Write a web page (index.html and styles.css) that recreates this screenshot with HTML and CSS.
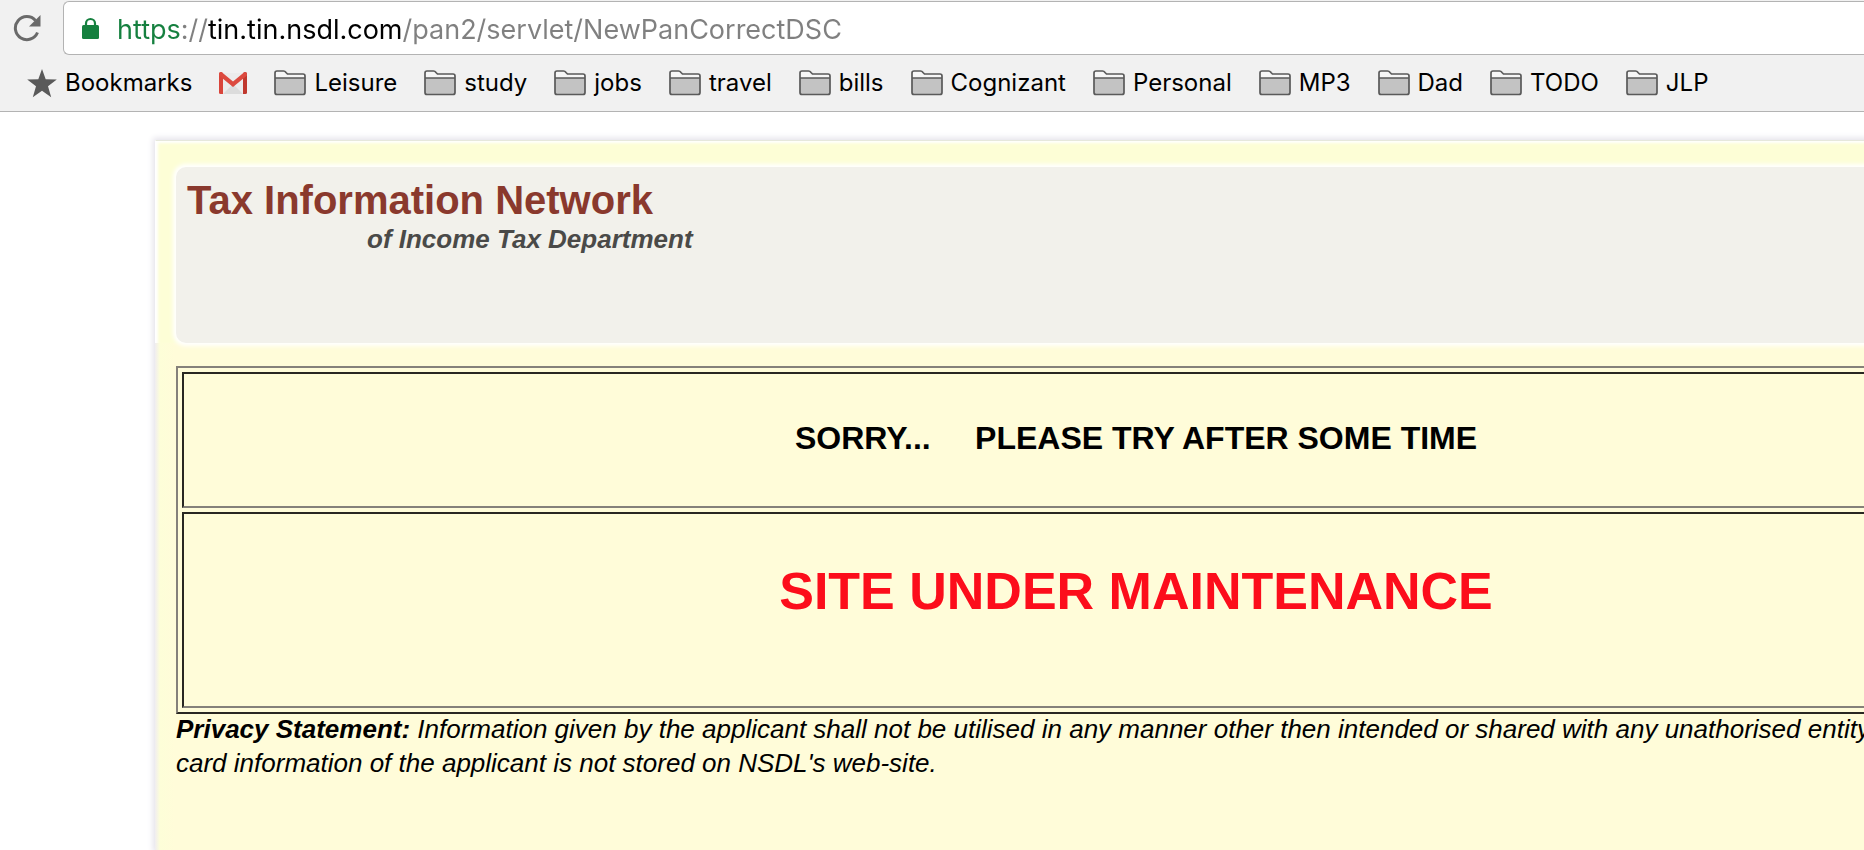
FILE: index.html
```html
<!DOCTYPE html>
<html lang="en">
<head>
  <meta charset="UTF-8" />
  <meta name="viewport" content="width=device-width, initial-scale=1.0" />
  <title>Tax Information Network</title>
  <link rel="stylesheet" href="styles.css">
</head>
<body>
  <svg class="sprite" aria-hidden="true">
    <symbol id="folder" viewBox="0 0 32 26">
      <path d="M1 23V3Q1 1 3 1H9.500Q11 1 12 2.500L13.500 4H29Q31 4 31 6V23Z" fill="#f6f6f6" />
      <path d="M1 8H31V23Q31 25 29 25H3Q1 25 1 23Z" fill="#c3c3c3" />
      <path d="M1 8H31M3 1H9.500Q11 1 12 2.500L13.500 4H29Q31 4 31 6V22.500Q31 24.500 29 24.500H3Q1 24.500 1 22.500V3Q1 1 3 1Z" fill="none" stroke="#5a5a5a" stroke-width="1.700" />
    </symbol>
  </svg>

  <header class="browser">
    <div class="toolbar">
      <button type="button" class="reload" aria-label="Reload">
        <svg width="28" height="28" viewBox="0 0 28 28">
          <path d="M24.500 18.500A11.500 11.500 0 1 1 22.500 6.500" fill="none" stroke="#6a6a6a" stroke-width="3" />
          <path d="M27.500 1V12.500H16Z" fill="#6a6a6a" />
        </svg>
      </button>
      <div class="address-bar">
        <svg width="17" height="22" viewBox="0 0 17 22" aria-hidden="true">
          <path d="M4 10V6.500a4.500 4.500 0 0 1 9 0V10" fill="none" stroke="#15803f" stroke-width="2.200" />
          <rect y="8" width="17" height="14" rx="1.500" fill="#15803f" />
        </svg>
        <input type="text" class="url" aria-label="Address" value="https://tin.tin.nsdl.com/pan2/servlet/NewPanCorrectDSC" spellcheck="false" />
      </div>
    </div>

    <nav class="bookmarks">
      <a href="#">
        <svg width="30" height="29" viewBox="0 0 30 29"><path d="M15 0L18.700 10.200L29.800 10.600L21 17.300L24.200 28.200L15 21.800L5.800 28.200L9 17.300L0.200 10.600L11.300 10.200Z" fill="#5a5a5a" /></svg>
        Bookmarks
      </a>
      <a href="#" aria-label="Gmail">
        <svg width="28" height="22" viewBox="0 0 28 22">
          <rect x="1" y="1" width="26" height="21" rx="1" fill="#ececec" />
          <path d="M4 22L14 12L24 22Z" fill="#dcdcdc" />
          <path d="M0 2Q0 0 2 0L4 1V22H1.500Q0 22 0 20.500Z" fill="#d9453b" />
          <path d="M28 2Q28 0 26 0L24 1V22H26.500Q28 22 28 20.500Z" fill="#c0382e" />
          <path d="M0 2Q0 0 2.500 0L14 9.500L25.500 0Q28 0 28 2V3.500L14 15L0 3.500Z" fill="#dc4a3f" />
        </svg>
      </a>
      <a href="#"><svg width="32" height="26"><use href="#folder" /></svg>Leisure</a>
      <a href="#"><svg width="32" height="26"><use href="#folder" /></svg>study</a>
      <a href="#"><svg width="32" height="26"><use href="#folder" /></svg>jobs</a>
      <a href="#"><svg width="32" height="26"><use href="#folder" /></svg>travel</a>
      <a href="#"><svg width="32" height="26"><use href="#folder" /></svg>bills</a>
      <a href="#"><svg width="32" height="26"><use href="#folder" /></svg>Cognizant</a>
      <a href="#"><svg width="32" height="26"><use href="#folder" /></svg>Personal</a>
      <a href="#"><svg width="32" height="26"><use href="#folder" /></svg>MP3</a>
      <a href="#"><svg width="32" height="26"><use href="#folder" /></svg>Dad</a>
      <a href="#"><svg width="32" height="26"><use href="#folder" /></svg>TODO</a>
      <a href="#"><svg width="32" height="26"><use href="#folder" /></svg>JLP</a>
    </nav>
  </header>

  <main class="page">
    <div class="banner">
      <div class="banner-box">
        <h1>Tax Information Network</h1>
        <p class="department">of Income Tax Department</p>
      </div>
    </div>

    <div class="content">
      <table class="notice">
        <tr>
          <td class="sorry">SORRY... &nbsp;&nbsp;&nbsp; PLEASE TRY AFTER SOME TIME</td>
        </tr>
        <tr>
          <td class="maintenance">SITE UNDER MAINTENANCE</td>
        </tr>
      </table>
      <p class="privacy"><b>Privacy Statement:</b> Information given by the applicant shall not be utilised in any manner other then intended or shared with any unathorised entity<br>card information of the applicant is not stored on NSDL's web-site.</p>
    </div>
  </main>
</body>
</html>
```
FILE: styles.css
```css
* {
  box-sizing: border-box;
  margin: 0;
  padding: 0;
}

body {
  min-height: 100vh;
  display: flex;
  flex-direction: column;
  background: #fff;
  font-family: "Liberation Sans", Arial, sans-serif;
  overflow: hidden;
}

.sprite {
  display: none;
}

/* Browser bars */
.browser {
  background: #f1f1f1;
  border-bottom: 1px solid #b3b3b3;
  font-family: Inter, sans-serif;
}

.toolbar {
  display: flex;
  align-items: center;
  gap: 22px;
  padding: 1px 0 0 13px;
}

.reload {
  display: flex;
  border: none;
  background: none;
}

.address-bar {
  flex: 1;
  display: flex;
  align-items: center;
  gap: 18px;
  height: 54px;
  padding-left: 18px;
  background: #fff;
  border: 1px solid #b3b3b3;
  border-right: none;
  border-radius: 6px 0 0 6px;
}

/* scheme, separator, host and path each take their own colour */
.url {
  flex: 1;
  padding-top: 3px;
  border: none;
  outline: none;
  font: 27px/34px Inter, sans-serif;
  color: transparent;
  background: linear-gradient(to right, #15803f 65px, #808080 65px, #808080 91px, #000 91px, #000 285px, #808080 285px);
  -webkit-background-clip: text;
  background-clip: text;
}

.bookmarks {
  display: flex;
  align-items: center;
  gap: 27px;
  height: 56px;
  padding-left: 27px;
}

.bookmarks a {
  display: flex;
  align-items: center;
  gap: 8px;
  color: #000;
  font-size: 24px;
  line-height: 32px;
  text-decoration: none;
}

/* Page */
.page {
  flex: 1;
  margin: 28px -253px 0 155px;
  background: linear-gradient(to right, #f0edf0, #fdfed8 5px, #fffcd9 20px);
  box-shadow: 0 0 6px 2px #e4e2ea;
}

.banner {
  padding: 26px 21px 0 20px;
  background: #fdfed6;
  border-top: 1px solid #e6e8dc;
  border-left: 1px solid #fff;
  box-shadow: inset 2px 2px 3px #fff;
}

.banner-box {
  min-height: 176px;
  padding: 10px 11px;
  background: #f2f1eb;
  border-radius: 10px;
  box-shadow: 0 0 4px 3px #fff;
}

h1 {
  color: #8a392d;
  font-size: 40px;
  line-height: 46px;
}

.department {
  margin-left: 180px;
  color: #4a4a48;
  font-size: 26px;
  line-height: 32px;
  font-weight: bold;
  font-style: italic;
}

.content {
  padding: 23px 21px 0;
}

.notice {
  width: 100%;
  border: 2px solid;
  border-color: #85817a #292722 #292722 #85817a;
  border-spacing: 4px;
  text-align: center;
  font-weight: bold;
}

.notice td {
  border: 2px solid;
  border-color: #292722 #85817a #85817a #292722;
}

.notice .sorry {
  padding: 46px 0 50px;
  font-size: 32px;
  line-height: 36px;
}

.notice .maintenance {
  padding: 47px 0 85px;
  color: #fc0d1b;
  font-size: 52px;
  line-height: 60px;
}

.privacy {
  margin-top: -2px;
  font-size: 26px;
  line-height: 34px;
  font-style: italic;
  white-space: nowrap;
}
```
